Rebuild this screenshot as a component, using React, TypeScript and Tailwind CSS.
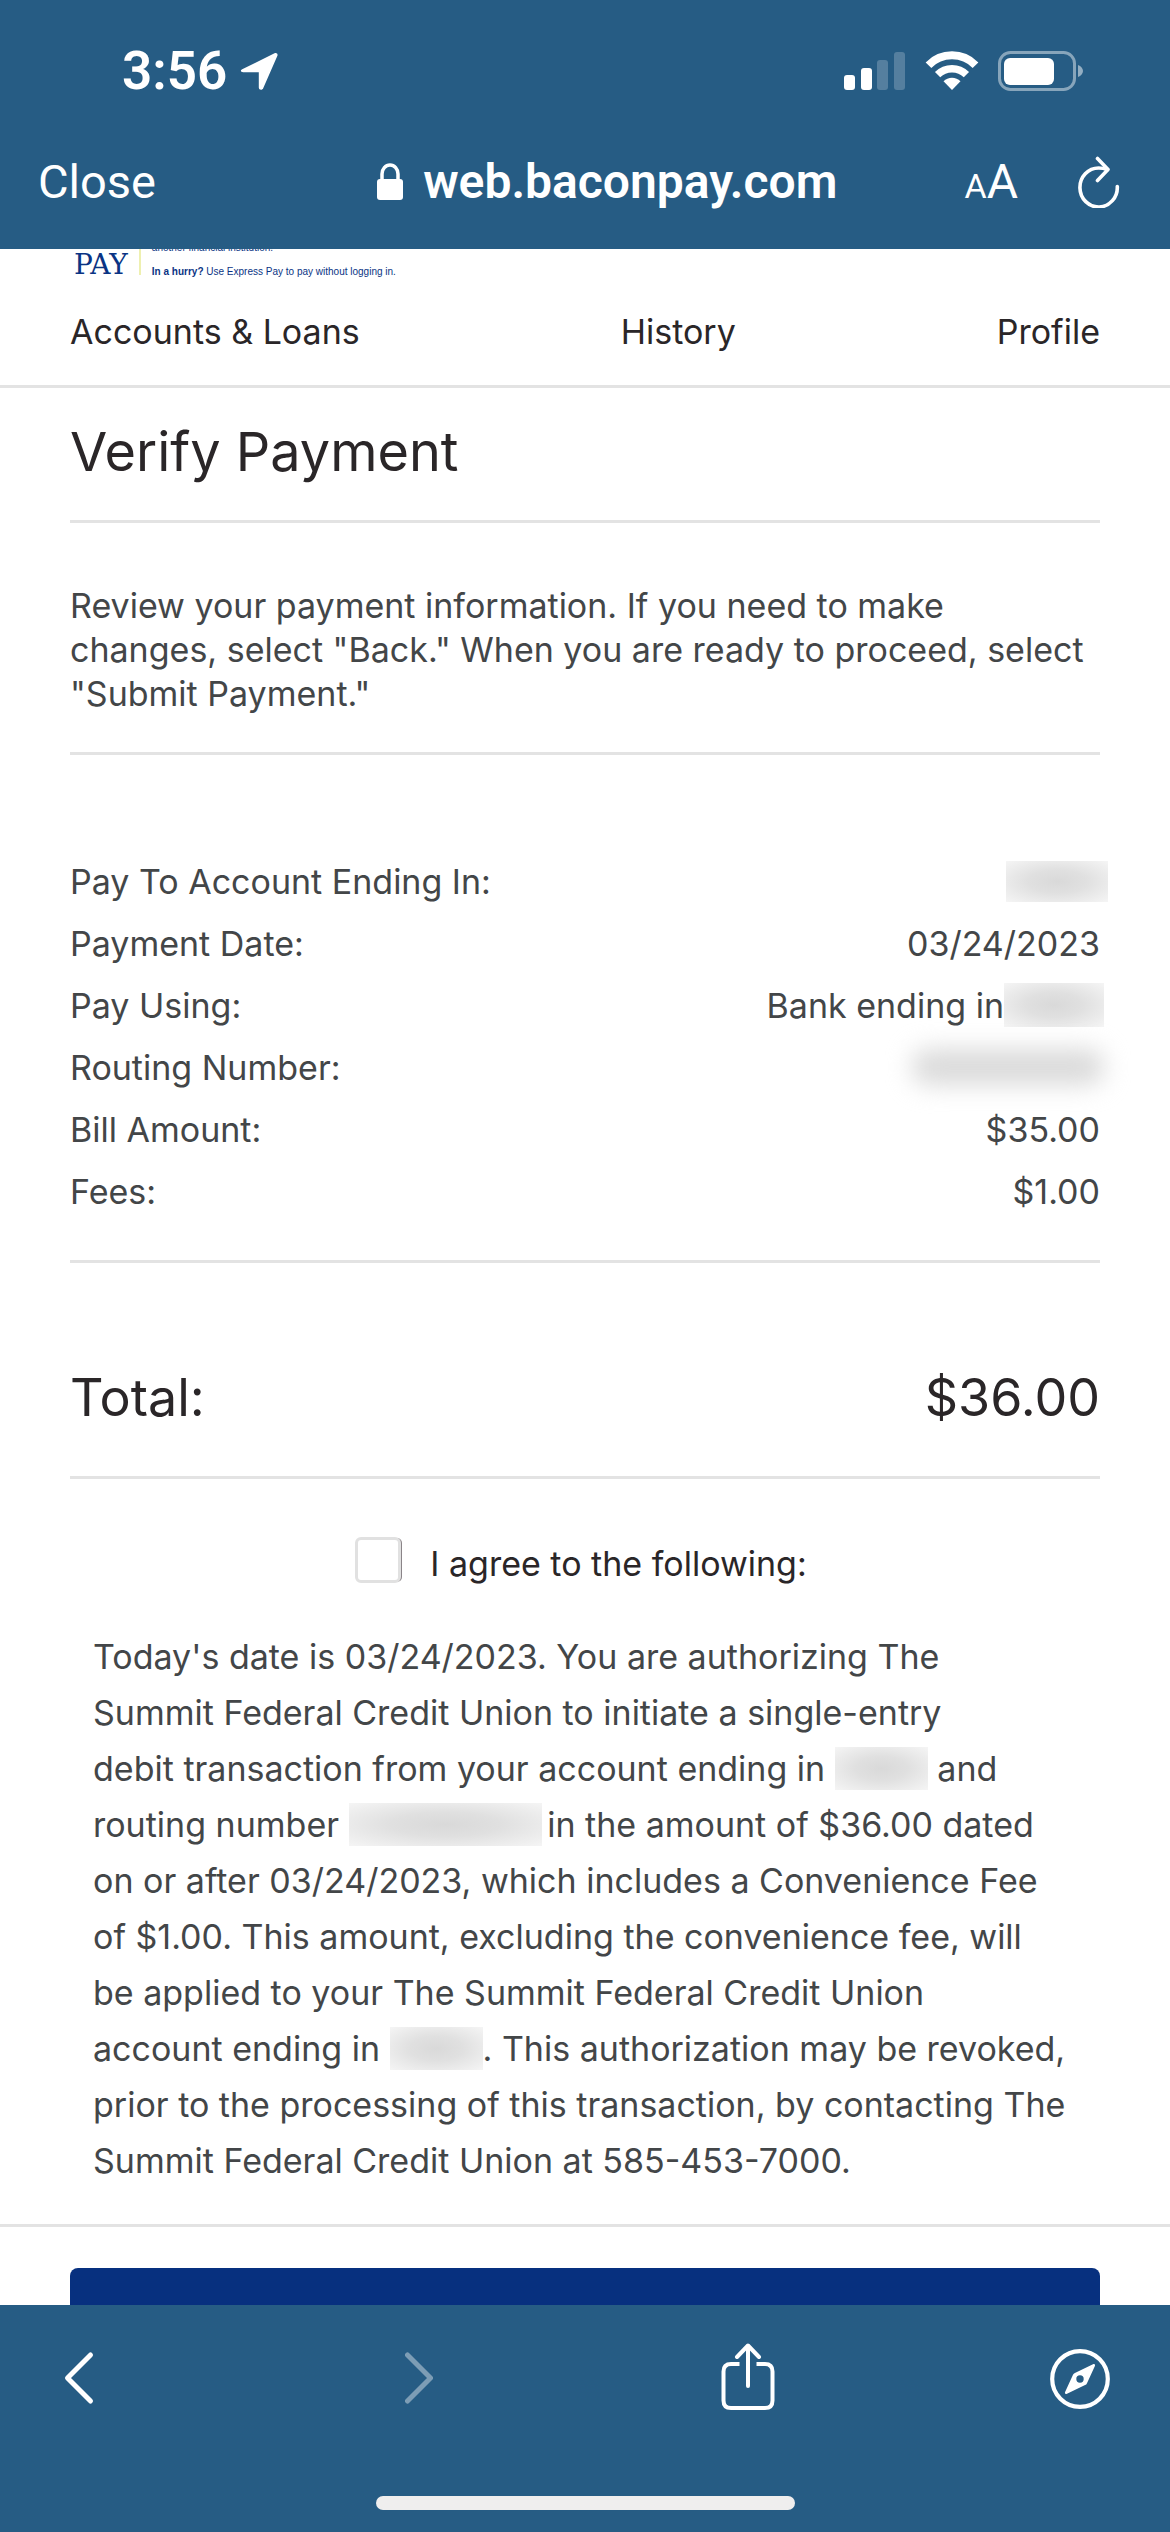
import type { ReactNode } from "react";

const NAV_LINKS = ["Accounts & Loans", "History", "Profile"];

const DETAILS: { label: string; value: ReactNode }[] = [
  {
    label: "Pay To Account Ending In:",
    value: <Redacted className="-mr-2 h-[41px] w-[102px]" />,
  },
  { label: "Payment Date:", value: "03/24/2023" },
  {
    label: "Pay Using:",
    value: (
      <>
        Bank ending in
        <Redacted className="-mr-1 h-11 w-[100px]" />
      </>
    ),
  },
  {
    label: "Routing Number:",
    value: <span className="-mr-1 h-9 w-[192px] rounded-2xl bg-[#dadada] blur-md" />,
  },
  { label: "Bill Amount:", value: "$35.00" },
  { label: "Fees:", value: "$1.00" },
];

function Redacted({ className }: { className: string }) {
  return (
    <span
      className={`inline-block bg-[radial-gradient(ellipse_at_center,#d9d9d9_0%,#e0e0e0_40%,#f5f5f5_100%)] ${className}`}
    />
  );
}

function LocationIcon() {
  return (
    <svg viewBox="0 0 40 40" className="size-10" fill="currentColor" aria-hidden="true">
      <path d="M3.2 18.2 35.5 2.3c2-1 3.7.6 2.8 2.7L24.2 37.2c-1 2.3-4.4 1.8-4.4-.8V21.2H4.2c-2.6 0-3.2-2-1-3Z" />
    </svg>
  );
}

function SignalIcon() {
  return (
    <svg viewBox="0 0 62 40" className="h-10 w-[62px]" fill="currentColor" aria-hidden="true">
      <rect x="0" y="24" width="11" height="15" rx="3" />
      <rect x="17" y="17" width="11" height="22" rx="3" />
      <rect x="33" y="9" width="11" height="30" rx="3" opacity="0.22" />
      <rect x="50" y="1" width="11" height="38" rx="3" opacity="0.22" />
    </svg>
  );
}

function WifiIcon() {
  return (
    <svg viewBox="0 0 54 40" className="h-10 w-[54px]" fill="none" stroke="currentColor" aria-hidden="true">
      <path d="M3.5 14.2a33 33 0 0 1 47 0" strokeWidth="8" />
      <path d="M12.6 23.6a20.4 20.4 0 0 1 28.8 0" strokeWidth="7.5" />
      <path d="M27 39 18.5 30.3a12 12 0 0 1 17 0Z" fill="currentColor" stroke="none" />
    </svg>
  );
}

function BatteryIcon() {
  return (
    <svg viewBox="0 0 86 40" className="h-10 w-[86px]" aria-hidden="true">
      <rect x="1.5" y="1.5" width="75" height="37" rx="11" fill="none" stroke="#fff" strokeWidth="3" opacity="0.45" />
      <rect x="6" y="7" width="50" height="27" rx="6" fill="#fff" />
      <path d="M80 14c3 1 5 3.5 5 6s-2 5-5 6Z" fill="#fff" opacity="0.5" />
    </svg>
  );
}

function LockIcon() {
  return (
    <svg viewBox="0 0 26 38" className="h-[38px] w-[26px]" aria-hidden="true">
      <rect x="0" y="16" width="26" height="21" rx="3" fill="#fff" />
      <path d="M5 18V11a8 9 0 0 1 16 0v7" fill="none" stroke="#fff" strokeWidth="3.5" />
    </svg>
  );
}

function ReloadIcon() {
  return (
    <svg viewBox="0 0 42 52" className="h-[52px] w-[42px]" fill="none" stroke="currentColor" strokeWidth="3.6" strokeLinecap="round" strokeLinejoin="round" aria-hidden="true">
      <path d="M39.3 30.5a18.7 19.5 0 1 1-18.7-18.5c3 0 6 .5 8.5 1.5" />
      <path d="m19.5 2.5 10.5 11-10.5 11" />
    </svg>
  );
}

function TextSizeIcon() {
  return (
    <span className="flex items-baseline">
      <span className="text-[34px]">A</span>
      <span className="text-[48px]">A</span>
    </span>
  );
}

function Divider() {
  return <hr className="border-t-3 border-[#e3e3e3]" />;
}

function BrowserHeader() {
  return (
    <header className="shrink-0 bg-[#265c84] font-['Roboto',sans-serif] text-white">
      {/* Status bar */}
      <div className="flex items-center justify-between pt-10 pr-[86px] pl-[122px]">
        <div className="flex items-center gap-3">
          <span className="text-[53px] leading-[62px] font-semibold">3:56</span>
          <LocationIcon />
        </div>
        <div className="flex items-center gap-[19px]">
          <SignalIcon />
          <WifiIcon />
          <BatteryIcon />
        </div>
      </div>

      {/* Address bar */}
      <div className="mt-[45px] flex h-[102px] items-start justify-between pr-[50px] pl-[38px]">
        <button className="text-[47px] leading-[70px]">Close</button>
        <div className="flex items-center gap-5 pl-[94px] text-[48px] leading-[70px] font-semibold">
          <LockIcon />
          web.baconpay.com
        </div>
        <div className="flex h-[70px] items-center gap-[60px]">
          <button aria-label="Text size">
            <TextSizeIcon />
          </button>
          <button aria-label="Reload">
            <ReloadIcon />
          </button>
        </div>
      </div>
    </header>
  );
}

function BrowserToolbar() {
  return (
    <footer className="shrink-0 bg-[#265c84] text-white">
      <div className="flex items-center justify-between pt-[38px] pr-[59px] pl-12">
        <button aria-label="Back" className="flex w-[62px] justify-center">
          <svg viewBox="0 0 34 70" className="h-[70px] w-[34px]" fill="none" stroke="currentColor" strokeWidth="5" strokeLinecap="round" strokeLinejoin="round">
            <path d="m28.5 12-23 23 23 23" />
          </svg>
        </button>
        <button aria-label="Forward" disabled className="flex w-[62px] justify-center pl-3 opacity-40">
          <svg viewBox="0 0 34 70" className="h-[70px] w-[34px]" fill="none" stroke="currentColor" strokeWidth="5" strokeLinecap="round" strokeLinejoin="round">
            <path d="m5.5 12 23 23-23 23" />
          </svg>
        </button>
        <button aria-label="Share" className="flex w-[62px] justify-center pl-1">
          <svg viewBox="0 0 54 70" className="h-[70px] w-[54px]" fill="none" stroke="currentColor" strokeWidth="4" strokeLinecap="round" strokeLinejoin="round">
            <path d="M18.5 21H10c-5 0-7.5 2.5-7.5 7.5v29c0 5 2.500 7.500 7.500 7.500h34c5 0 7.500-2.500 7.500-7.500v-29c0-5-2.500-7.500-7.500-7.500h-8.500" strokeLinecap="butt" />
            <path d="M27 43V4" />
            <path d="M16 14 27 2.500 38 14" />
          </svg>
        </button>
        <button aria-label="Open in browser">
          <svg viewBox="0 0 62 70" className="h-[70px] w-[62px]">
            <circle cx="31" cy="36" r="27.8" fill="none" stroke="currentColor" strokeWidth="4.2" />
            <path d="M44 21.3c1.5-.7 2.5.3 1.9 1.8L38 40.2c-.4.9-1 1.5-1.9 1.9L18 50.8c-1.5.7-2.5-.3-1.9-1.8L24 31.8c.4-.9 1-1.5 1.9-1.900ZM31 32.300a3.700 3.700 0 1 0 0 7.400 3.700 3.700 0 0 0 0-7.400Z" fill="currentColor" fillRule="evenodd" />
          </svg>
        </button>
      </div>
      <div className="mx-auto mt-[83px] mb-[22px] h-3.5 w-[419px] rounded-full bg-[#efeeee]" />
    </footer>
  );
}

export default function App() {
  return (
    <div className="flex h-screen flex-col bg-white font-['Inter',sans-serif] text-[34px] text-[#434648]">
      <BrowserHeader />

      <main className="min-h-0 flex-1 overflow-hidden">
        {/* Banner, scrolled most of the way up */}
        <div className="flex h-[34px] items-end gap-[11px] overflow-hidden px-[74px] text-[#0a3484]">
          <span className="pb-1 font-['DejaVu_Serif',serif] text-[28px] leading-7">PAY</span>
          <span className="h-[26px] w-0.5 self-start bg-[#eef0b0]" />
          <p className="pb-1 font-['Liberation_Sans',sans-serif] text-[10px] leading-[14px]">
            another financial institution.
            <span className="block pt-2.5">
              <b>In a hurry?</b> Use Express Pay to pay without logging in.
            </span>
          </p>
        </div>

        <nav className="flex justify-between px-[70px] pt-7 pb-8 leading-[42px] text-[#2a2628]">
          {NAV_LINKS.map((link) => (
            <a key={link} href="#">
              {link}
            </a>
          ))}
        </nav>
        <Divider />

        <div className="px-[70px]">
          <h1 className="pt-8 pb-9 text-[54px] leading-[64px] text-[#2a2628]">Verify Payment</h1>
          <Divider />
          <p className="pt-[61px] pb-9 leading-11">
            Review your payment information. If you need to make
            <br />
            changes, select "Back." When you are ready to proceed, select
            <br />
            "Submit Payment."
          </p>
          <Divider />

          {/* Payment details */}
          <dl className="pt-[95px] pb-[38px]">
            {DETAILS.map(({ label, value }) => (
              <div key={label} className="flex h-[62px] items-center justify-between">
                <dt>{label}</dt>
                <dd className="flex items-center">{value}</dd>
              </div>
            ))}
          </dl>
          <Divider />

          <div className="flex justify-between pt-[102px] pb-[45px] text-[52px] leading-[66px] text-[#2a2628]">
            <span>Total:</span>
            <span>$36.00</span>
          </div>
          <Divider />
        </div>

        <label className="flex items-center justify-center gap-[29px] pt-14 pr-2 text-[#2a2628]">
          <input
            type="checkbox"
            className="size-[46px] appearance-none rounded-md border-3 border-[#e1e1e1] bg-white shadow-[2px_0_0_-1px_#8a8488]"
          />
          <span className="pt-2 leading-[42px]">I agree to the following:</span>
        </label>

        <p className="px-[93px] pt-11 pb-[35px] leading-14">
          Today's date is 03/24/2023. You are authorizing The
          <br />
          Summit Federal Credit Union to initiate a single-entry
          <br />
          debit transaction from your account ending in <Redacted className="mb-1.5 h-[43px] w-[93px] align-middle" /> and
          <br />
          routing number <Redacted className="-mr-1 mb-1.5 h-[43px] w-[193px] align-middle" /> in the amount of $36.00 dated
          <br />
          on or after 03/24/2023, which includes a Convenience Fee
          <br />
          of $1.00. This amount, excluding the convenience fee, will
          <br />
          be applied to your The Summit Federal Credit Union
          <br />
          account ending in <Redacted className="mb-1.5 h-[43px] w-[93px] align-middle" />. This authorization may be revoked,
          <br />
          prior to the processing of this transaction, by contacting The
          <br />
          Summit Federal Credit Union at 585-453-7000.
        </p>
        <Divider />

        <div className="px-[70px] pt-[41px]">
          <button aria-label="Submit Payment" className="block h-[120px] w-full rounded-lg bg-[#07307f]" />
        </div>
      </main>

      <BrowserToolbar />
    </div>
  );
}
